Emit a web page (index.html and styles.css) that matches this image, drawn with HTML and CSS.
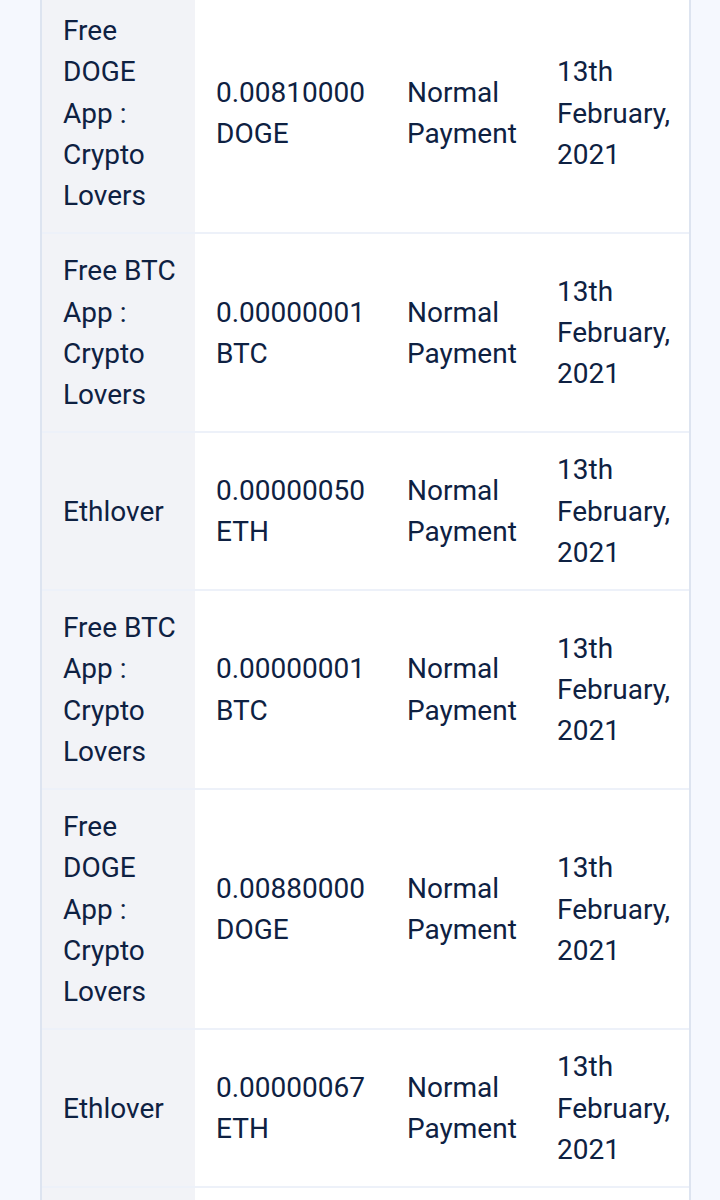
FILE: index.html
```html
<!DOCTYPE html>
<html lang="en">
<head>
    <meta charset="UTF-8">
    <meta name="viewport" content="width=device-width, initial-scale=1.0">
    <title>Payments</title>
    <link rel="stylesheet" href="styles.css">
</head>
<body>
    <div class="table-wrap">
        <table class="payments">
            <colgroup>
                <col class="col-app">
                <col class="col-amount">
                <col class="col-type">
                <col class="col-date">
            </colgroup>
            <tbody>
                <tr>
                    <th>Free DOGE App : Crypto Lovers</th>
                    <td>0.00810000 DOGE</td>
                    <td>Normal Payment</td>
                    <td>13th February, 2021</td>
                </tr>
                <tr>
                    <th>Free BTC App : Crypto Lovers</th>
                    <td>0.00000001 BTC</td>
                    <td>Normal Payment</td>
                    <td>13th February, 2021</td>
                </tr>
                <tr>
                    <th>Ethlover</th>
                    <td>0.00000050 ETH</td>
                    <td>Normal Payment</td>
                    <td>13th February, 2021</td>
                </tr>
                <tr>
                    <th>Free BTC App : Crypto Lovers</th>
                    <td>0.00000001 BTC</td>
                    <td>Normal Payment</td>
                    <td>13th February, 2021</td>
                </tr>
                <tr>
                    <th>Free DOGE App : Crypto Lovers</th>
                    <td>0.00880000 DOGE</td>
                    <td>Normal Payment</td>
                    <td>13th February, 2021</td>
                </tr>
                <tr>
                    <th>Ethlover</th>
                    <td>0.00000067 ETH</td>
                    <td>Normal Payment</td>
                    <td>13th February, 2021</td>
                </tr>
                <tr>
                    <th>Free BTC App : Crypto Lovers</th>
                    <td>0.00000001 BTC</td>
                    <td>Normal Payment</td>
                    <td>13th February, 2021</td>
                </tr>
            </tbody>
        </table>
    </div>
</body>
</html>
```

FILE: styles.css
```css
body {
    margin: 0;
    background: #f5f8fe;
    font-family: Roboto, "Noto Sans", sans-serif;
    color: #0e2142;
    overflow: hidden;
}

.table-wrap {
    margin: -8px 0 0 40px;
    width: 651px;
}

.payments {
    width: 651px;
    table-layout: fixed;
    border-collapse: separate;
    border-spacing: 0;
    background: #ffffff;
    border-left: 2px solid #dde4f0;
    border-right: 2px solid #dde4f0;
}

.col-app { width: 153px; }
.col-amount { width: 191px; }
.col-type { width: 150px; }
.col-date { width: 153px; }

.payments th,
.payments td {
    border-top: 2px solid #edf1f9;
    padding: 16px 18px 16px 21px;
    font-size: 28px;
    line-height: 41.25px;
    font-weight: 400;
    text-align: left;
    vertical-align: middle;
}

.payments th {
    background: #f2f3f7;
}
```
